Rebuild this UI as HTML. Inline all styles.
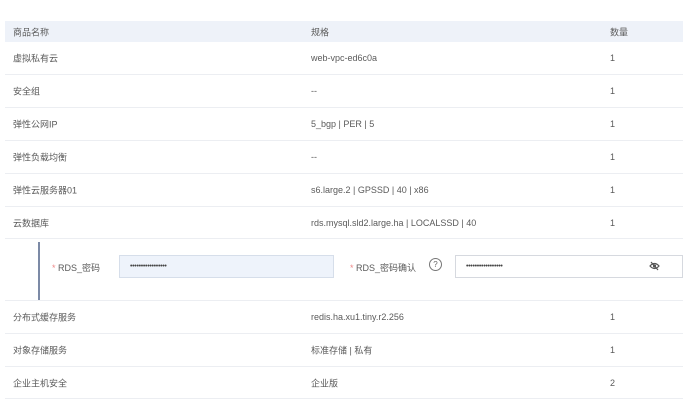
<!DOCTYPE html>
<html><head><meta charset="utf-8"><style>
body{margin:0;width:683px;height:413px;background:#fff;font-family:"Liberation Sans","Noto Sans CJK SC",sans-serif;font-size:9px;color:#5a5a5a;position:relative;overflow:hidden}
.r{position:absolute;left:5px;width:678px;border-bottom:1px solid #eceef2}
.r span{position:absolute;top:50%;transform:translateY(-50%);white-space:nowrap}
.a{left:8px}.b{left:306px}.c{left:605px}
.h{background:#eef2f9;border-bottom:none}
.pw{font-size:7px;line-height:21px;padding:0 10px;letter-spacing:-0.3px}
</style></head><body>
<div class="r h" style="top:21px;height:21px"><span class="a">商品名称</span><span class="b">规格</span><span class="c">数量</span></div>
<div class="r" style="top:42px;height:32px"><span class="a">虚拟私有云</span><span class="b">web-vpc-ed6c0a</span><span class="c">1</span></div>
<div class="r" style="top:75px;height:32px"><span class="a">安全组</span><span class="b">--</span><span class="c">1</span></div>
<div class="r" style="top:108px;height:32px"><span class="a">弹性公网IP</span><span class="b">5_bgp | PER | 5</span><span class="c">1</span></div>
<div class="r" style="top:141px;height:32px"><span class="a">弹性负载均衡</span><span class="b">--</span><span class="c">1</span></div>
<div class="r" style="top:174px;height:32px"><span class="a">弹性云服务器01</span><span class="b">s6.large.2 | GPSSD | 40 | x86</span><span class="c">1</span></div>
<div class="r" style="top:207px;height:31px"><span class="a">云数据库</span><span class="b">rds.mysql.sld2.large.ha | LOCALSSD | 40</span><span class="c">1</span></div>
<div style="position:absolute;left:38px;top:242px;width:2px;height:58px;background:#7c8aa6"></div>
<div style="position:absolute;left:5px;top:300px;width:678px;border-bottom:1px solid #eceef2"></div>
<div style="position:absolute;left:52px;top:261px;font-size:9px"><span style="color:#e88">*</span> RDS_密码</div>
<div class="pw" style="position:absolute;left:119px;top:255px;width:215px;height:23px;background:#eef3fb;border:1px solid #d6deea;box-sizing:border-box;color:#444">•••••••••••••••••</div>
<div style="position:absolute;left:350px;top:261px;font-size:9px"><span style="color:#e88">*</span> RDS_密码确认</div>
<div style="position:absolute;left:429px;top:258px;width:11px;height:11px;border:1px solid #777;border-radius:50%;font-size:8px;text-align:center;line-height:11px;color:#666">?</div>
<div class="pw" style="position:absolute;left:455px;top:255px;width:228px;height:23px;border:1px solid #d6d9df;box-sizing:border-box;color:#444">•••••••••••••••••</div>
<svg style="position:absolute;left:649px;top:261px" width="11" height="10" viewBox="0 0 11 10"><path d="M1 5Q5.5 0 10 5Q5.5 10 1 5Z" fill="none" stroke="#555" stroke-width="1.2"/><circle cx="5.5" cy="5" r="1.6" fill="#555"/><path d="M2 1L9 9" stroke="#555" stroke-width="1.2"/></svg>
<div class="r" style="top:301px;height:32px"><span class="a">分布式缓存服务</span><span class="b">redis.ha.xu1.tiny.r2.256</span><span class="c">1</span></div>
<div class="r" style="top:334px;height:32px"><span class="a">对象存储服务</span><span class="b">标准存储 | 私有</span><span class="c">1</span></div>
<div class="r" style="top:367px;height:31px"><span class="a">企业主机安全</span><span class="b">企业版</span><span class="c">2</span></div>
</body></html>
